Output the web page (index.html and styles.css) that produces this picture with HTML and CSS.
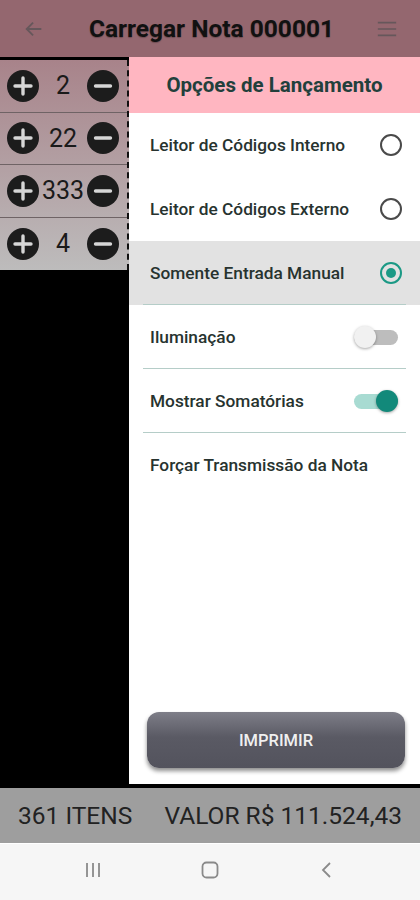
FILE: index.html
```html
<!DOCTYPE html>
<html lang="pt-BR">
<head>
<meta charset="UTF-8">
<meta name="viewport" content="width=device-width, initial-scale=1.0">
<title>Carregar Nota</title>
<link rel="stylesheet" href="styles.css">
</head>
<body>
    <header class="topbar">
        <svg class="topbar-icon" width="22" height="22" viewBox="0 0 24 24"><path d="M20 12H5M11 5l-7 7 7 7" fill="none" stroke="currentColor" stroke-width="2"/></svg>
        <h1>Carregar Nota 000001</h1>
        <svg class="topbar-icon" width="22" height="22" viewBox="0 0 24 24"><path d="M2 5h20M2 12h20M2 19h20" fill="none" stroke="currentColor" stroke-width="1.8"/></svg>
    </header>

    <main class="content">
        <div class="strip">
            <div class="rows">
                <div class="row">
                    <svg class="btn-circle" viewBox="0 0 32 32"><circle cx="16" cy="16" r="16"/><path d="M16 8v16M8 16h16"/></svg>
                    <span class="qty">2</span>
                    <svg class="btn-circle" viewBox="0 0 32 32"><circle cx="16" cy="16" r="16"/><path d="M8.5 16h15"/></svg>
                </div>
                <div class="row">
                    <svg class="btn-circle" viewBox="0 0 32 32"><circle cx="16" cy="16" r="16"/><path d="M16 8v16M8 16h16"/></svg>
                    <span class="qty">22</span>
                    <svg class="btn-circle" viewBox="0 0 32 32"><circle cx="16" cy="16" r="16"/><path d="M8.5 16h15"/></svg>
                </div>
                <div class="row">
                    <svg class="btn-circle" viewBox="0 0 32 32"><circle cx="16" cy="16" r="16"/><path d="M16 8v16M8 16h16"/></svg>
                    <span class="qty">333</span>
                    <svg class="btn-circle" viewBox="0 0 32 32"><circle cx="16" cy="16" r="16"/><path d="M8.5 16h15"/></svg>
                </div>
                <div class="row">
                    <svg class="btn-circle" viewBox="0 0 32 32"><circle cx="16" cy="16" r="16"/><path d="M16 8v16M8 16h16"/></svg>
                    <span class="qty">4</span>
                    <svg class="btn-circle" viewBox="0 0 32 32"><circle cx="16" cy="16" r="16"/><path d="M8.5 16h15"/></svg>
                </div>
            </div>
        </div>

        <aside class="drawer">
            <div class="drawer-head">Opções de Lançamento</div>
            <div class="option">
                <span>Leitor de Códigos Interno</span>
                <span class="radio"></span>
            </div>
            <div class="option">
                <span>Leitor de Códigos Externo</span>
                <span class="radio"></span>
            </div>
            <div class="option selected">
                <span>Somente Entrada Manual</span>
                <span class="radio checked"></span>
            </div>
            <div class="option">
                <span>Iluminação</span>
                <span class="switch"><span class="knob"></span></span>
            </div>
            <div class="option">
                <span>Mostrar Somatórias</span>
                <span class="switch on"><span class="knob"></span></span>
            </div>
            <div class="option last">
                <span>Forçar Transmissão da Nota</span>
            </div>
            <div class="drawer-foot">
                <button class="print">IMPRIMIR</button>
            </div>
        </aside>
    </main>

    <footer class="totals">
        <span>361 ITENS</span>
        <span>VALOR R$ 111.524,43</span>
    </footer>

    <nav class="sysnav">
        <svg width="20" height="20" viewBox="0 0 20 20"><path d="M4 3v14M10 3v14M16 3v14" stroke="#8a8a8a" stroke-width="1.8"/></svg>
        <svg width="20" height="20" viewBox="0 0 20 20"><rect x="2.5" y="2.5" width="15" height="15" rx="4" fill="none" stroke="#8a8a8a" stroke-width="1.8"/></svg>
        <svg width="20" height="20" viewBox="0 0 20 20"><path d="M13 3l-7 7 7 7" fill="none" stroke="#8a8a8a" stroke-width="1.8"/></svg>
    </nav>
</body>
</html>
```

FILE: styles.css
```css
* {
    box-sizing: border-box;
}
body {
    margin: 0;
    width: 420px;
    height: 900px;
    display: flex;
    flex-direction: column;
    font-family: Roboto, "Liberation Sans", sans-serif;
    background: #000;
}

/* header */
.topbar {
    height: 57px;
    background: #94676f;
    display: flex;
    align-items: center;
    justify-content: space-between;
    padding: 0 22px 0 23px;
}
.topbar h1 {
    margin: 0 0 0 2px;
    font-size: 24.5px;
    font-weight: 700;
    color: #111;
    text-shadow: 0 1px 1px rgba(0,0,0,.25);
}
.topbar-icon {
    color: #66575b;
}

/* main */
.content {
    flex: 1;
    display: flex;
    background: #000;
}
.strip {
    width: 129px;
    padding-top: 3px;
}
.rows {
    background: linear-gradient(#a8838a, #bdbcbc);
    border-right: 2px dashed #111;
}
.row {
    height: 52.5px;
    display: flex;
    align-items: center;
    padding-left: 7px;
    border-bottom: 1px solid #6f6365;
}
.row:last-child {
    border-bottom: none;
}
.btn-circle {
    width: 32px;
    height: 32px;
    flex: none;
}
.btn-circle circle {
    fill: #1c1c1c;
}
.btn-circle path {
    stroke: #d6d6d6;
    stroke-width: 3.4;
    stroke-linecap: round;
}
.qty {
    width: 48px;
    text-align: center;
    font-size: 25px;
    color: #1a1a1a;
}

/* drawer */
.drawer {
    flex: 1;
    display: flex;
    flex-direction: column;
    background: #fff;
    margin-bottom: 4px;
}
.drawer-head {
    height: 56px;
    background: #ffb6c1;
    display: flex;
    align-items: center;
    justify-content: center;
    font-size: 20.5px;
    font-weight: 700;
    color: #22403c;
}
.option {
    height: 64px;
    display: flex;
    align-items: center;
    justify-content: space-between;
    padding: 0 20px 0 21px;
    font-size: 17.3px;
    font-weight: 500;
    color: #27332f;
    position: relative;
}
.option.selected {
    background: #e2e2e2;
}
.option.selected::after,
.option:nth-child(5)::after,
.option:nth-child(6)::after {
    content: "";
    position: absolute;
    left: 14px;
    right: 14px;
    bottom: 0;
    height: 1px;
    background: #b5cdc8;
}
.radio {
    width: 22px;
    height: 22px;
    border: 2px solid #4a4a4a;
    border-radius: 50%;
    margin-right: -2px;
    display: flex;
    align-items: center;
    justify-content: center;
}
.radio.checked {
    border-color: #1b9985;
}
.radio.checked::before {
    content: "";
    width: 10px;
    height: 10px;
    border-radius: 50%;
    background: #1b9985;
}
.switch {
    width: 44px;
    height: 15px;
    border-radius: 8px;
    background: #bdbdbd;
    display: flex;
    align-items: center;
    margin-right: 2px;
}
.knob {
    width: 22px;
    height: 22px;
    border-radius: 50%;
    background: #f1f1f1;
    box-shadow: 0 1px 3px rgba(0,0,0,.35);
}
.switch.on {
    background: #a8dbd2;
    justify-content: flex-end;
}
.switch.on .knob {
    background: #12897a;
}
.drawer-foot {
    flex: 1;
    display: flex;
    align-items: flex-end;
    padding: 0 15px 16px 18px;
}
.print {
    width: 100%;
    height: 56px;
    border: none;
    border-radius: 12px;
    background: linear-gradient(#7e7e88, #5a5a64 45%, #53535d);
    color: #f0f0f0;
    font-family: Roboto, "Liberation Sans", sans-serif;
    font-size: 16.5px;
    font-weight: 500;
    box-shadow: 0 3px 4px rgba(0,0,0,.45);
}

/* totals */
.totals {
    height: 56px;
    background: #9e9e9e;
    display: flex;
    align-items: center;
    justify-content: space-between;
    padding: 0 18px;
    font-size: 24.5px;
    color: #222;
    border-bottom: 1px solid #fff;
}

/* system nav */
.sysnav {
    height: 56px;
    background: #f6f6f6;
    display: flex;
    align-items: center;
    justify-content: center;
    gap: 97px;
    padding-bottom: 4px;
}
```
